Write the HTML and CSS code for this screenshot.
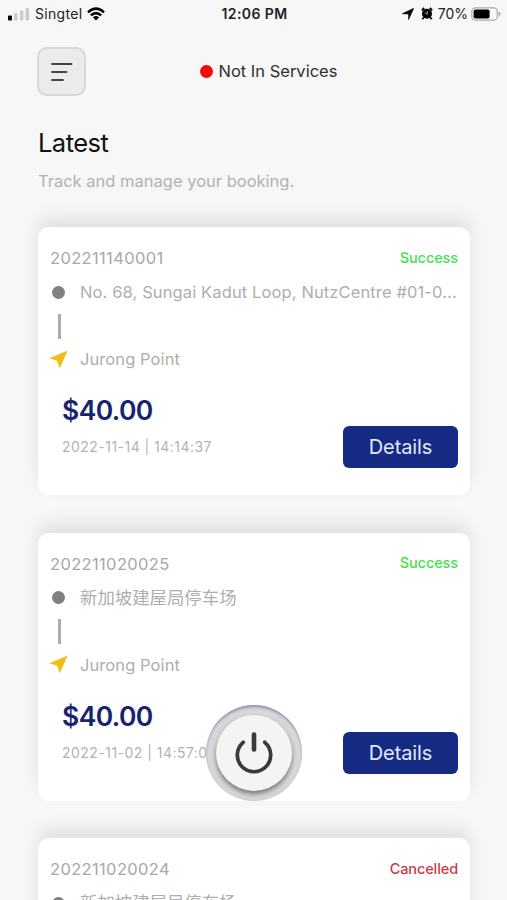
FILE: index.html
```html
<!DOCTYPE html>
<html lang="en">
<head>
<meta charset="utf-8">
<title>Bookings</title>
<link rel="stylesheet" href="styles.css">
</head>
<body>
<div class="screen">
  <div class="status-bar">
    <div class="status-left">
      <svg class="signal" width="22" height="14" viewBox="0 0 22 14"><rect x="0" y="8.5" width="4" height="5" rx="1" fill="#000"/><rect x="6" y="6" width="3.6" height="7.5" rx="1" fill="#ccc"/><rect x="11.8" y="3.5" width="3.6" height="10" rx="1" fill="#ccc"/><rect x="17.4" y="1" width="3.8" height="12.5" rx="1" fill="#ccc"/></svg>
      <span class="carrier">Singtel</span>
      <svg class="wifi" width="18" height="14" viewBox="0 0 18 14" fill="none" stroke="#000" stroke-width="2.5"><path d="M1 5.3Q9-2 17 5.3"/><path d="M3.9 8.4Q9 3.8 14.1 8.4"/><path d="M9 13.6L5.9 10.3Q9 7.8 12.1 10.3Z" fill="#000" stroke="none"/></svg>
    </div>
    <span class="clock">12:06 PM</span>
    <div class="status-right">
      <svg width="12" height="12" viewBox="0 0 11 11"><path d="M10.8.2L6 10.7V5.5L.2 5.3Z" fill="#000" stroke="#000" stroke-width=".5"/></svg>
      <svg class="alarm" width="12" height="13" viewBox="0 0 12 13"><circle cx="6" cy="6.8" r="5" fill="#000"/><path d="M.8 3.3L3.2 1M8.8 1l2.4 2.3M2.6 10.6L1.4 12.3M9.4 10.6l1.2 1.7" stroke="#000" stroke-width="1.8"/><path d="M6.3 4v3.2L3.9 5.8" fill="none" stroke="#bbb" stroke-width=".8"/></svg>
      <span class="percent">70%</span>
      <svg class="battery" width="30" height="14" viewBox="0 0 30 14"><rect x=".8" y=".8" width="25.5" height="12.4" rx="3.8" fill="#fafafa" stroke="#aaa" stroke-width="1.2"/><rect x="2.6" y="2.5" width="16" height="9" rx="1.8" fill="#000"/><path d="M27.6 4.8Q29.6 5.4 29.6 7T27.6 9.2Z" fill="#aaa"/></svg>
    </div>
  </div>

  <header class="top">
    <button class="menu" aria-label="Menu"><svg width="22" height="20" viewBox="0 0 22 20" fill="none" stroke="#444" stroke-width="1.8" stroke-linecap="round"><path d="M1 2H20.500M1 10H15.500M1 18H12"/></svg></button>
    <div class="service"><i class="red-dot"></i><span>Not In Services</span></div>
  </header>

  <h1>Latest</h1>
  <p class="subtitle">Track and manage your booking.</p>

  <main class="cards">
    <article class="card">
      <div class="card-head"><span class="id">202211140001</span><span class="state ok">Success</span></div>
      <div class="stop"><i class="dot"></i><span class="address">No. 68, Sungai Kadut Loop, NutzCentre #01-0...</span></div>
      <div class="line"></div>
      <div class="stop goal"><svg class="arrow" width="19" height="19" viewBox="0 0 19 19"><path d="M18.700.5L10.800 18.300L8.200 10.700L.3 8.200Z" fill="#f4bd16"/></svg><span class="place">Jurong Point</span></div>
      <div class="card-foot"><div><div class="price">$40.00</div><div class="date">2022-11-14 | 14:14:37</div></div><button class="details">Details</button></div>
    </article>
    <article class="card">
      <div class="card-head"><span class="id">202211020025</span><span class="state ok">Success</span></div>
      <div class="stop"><i class="dot"></i><span class="cjk">新加坡建屋局停车场</span></div>
      <div class="line"></div>
      <div class="stop goal"><svg class="arrow" width="19" height="19" viewBox="0 0 19 19"><path d="M18.700.5L10.800 18.300L8.200 10.700L.3 8.200Z" fill="#f4bd16"/></svg><span class="place">Jurong Point</span></div>
      <div class="card-foot"><div><div class="price">$40.00</div><div class="date">2022-11-02 | 14:57:0</div></div><button class="details">Details</button></div>
    </article>
    <article class="card">
      <div class="card-head"><span class="id">202211020024</span><span class="state bad">Cancelled</span></div>
      <div class="stop"><i class="dot"></i><span class="cjk">新加坡建屋局停车场</span></div>
    </article>
  </main>

  <button class="power" aria-label="Power"><span class="power-face"><svg width="40" height="44" viewBox="0 0 40 44" fill="none" stroke="#3a3a3a" stroke-width="3.700" stroke-linecap="round"><path d="M9.200 11.300A16.700 16.700 0 1 0 30.800 11.300"/><path d="M20 3.500V18.500" stroke-width="4.600"/></svg></span></button>
</div>
</body>
</html>
```
FILE: styles.css
```css
* { box-sizing: border-box; }
body { margin: 0; background: #f7f7f7; font-family: Inter, "Noto Sans CJK SC", sans-serif; }
button { font: inherit; border: 0; padding: 0; }
.screen { position: relative; width: 507px; height: 900px; overflow: hidden; white-space: nowrap; }
.status-bar { height: 27px; display: grid; grid-template-columns: 1fr auto 1fr; align-items: center; padding: 0 6px 0 8px; color: #222; font-size: 14px; line-height: 20px; }
.status-left, .status-right { display: flex; align-items: center; }
.status-right { justify-content: flex-end; }
.carrier { margin-left: 5px; letter-spacing: .3px; }
.wifi { margin-left: 5px; }
.clock { font-weight: 600; letter-spacing: .4px; }
.alarm { margin-left: 7px; }
.percent { margin: 0 3px 0 5px; }
.top { height: 48px; margin: 20px 38px 0 37px; display: grid; grid-template-columns: 162.500px 1fr; align-items: center; }
.menu { width: 49px; height: 49px; border: 2px solid #d8d8d8; border-radius: 10px; background: #ebebeb; display: grid; place-items: center; }
.service { display: flex; align-items: center; gap: 6px; margin-top: -1px; font-size: 16.500px; line-height: 22px; color: #303030; }
.red-dot { width: 13px; height: 13px; border-radius: 50%; background: #f40808; }
h1 { margin: 31px 0 0 38px; font-size: 25.500px; line-height: 34px; font-weight: 400; letter-spacing: -.55px; color: #111; }
.subtitle { margin: 10px 0 0 38px; font-size: 16.500px; line-height: 22px; color: #b2b2b2; }
.cards { margin: 35px 37px 0 38px; display: flex; flex-direction: column; gap: 37.500px; }
.card { height: 268px; flex: none; border-radius: 11px; background: #fff; padding: 20px 12px 0; box-shadow: 0 -10px 18px rgba(0, 0, 0, .09); }
.card-head { display: flex; justify-content: space-between; align-items: center; height: 22px; }
.id { font-size: 16.500px; line-height: 22px; letter-spacing: .35px; color: #a8a8a8; }
.state { font-size: 14.500px; font-weight: 500; line-height: 20px; margin-top: -.5px; letter-spacing: -.1px; }
.ok { color: #48df50; }
.bad { color: #c83b45; }
.stop { height: 22px; margin-top: 12px; display: flex; align-items: center; color: #aeaeae; font-size: 16.500px; line-height: 22px; }
.dot { width: 13px; height: 13px; margin: 0 15px 0 2px; border-radius: 50%; background: #808080; }
.address { letter-spacing: .12px; }
.place { letter-spacing: .08px; }
.cjk { font-size: 17.400px; }
.line { width: 3px; height: 25px; margin: 10.500px 0 0 7.500px; background: #acacac; }
.goal { margin-top: 9.500px; }
.arrow { margin: 0 12px 0 -1px; }
.card-foot { display: flex; justify-content: space-between; align-items: flex-end; margin: 23px 0 0 12px; }
.price { font-size: 26.500px; line-height: 34px; font-weight: 600; letter-spacing: -.6px; color: #17246f; }
.date { margin: 10px 0 11px; font-size: 14px; line-height: 20px; letter-spacing: .47px; color: #b3b3b3; }
.details { width: 115px; height: 42px; border-radius: 6px; background: #142a83; color: #e3e9fc; font-size: 20px; letter-spacing: -.1px; }
.power { position: absolute; left: 206px; top: 705px; width: 96px; height: 96px; border-radius: 50%; background: #d8d8da; box-shadow: inset 0 3px 3px -1px #8792b0, inset 0 0 3px #c2c2c4; display: grid; place-items: center; }
.power-face { width: 76px; height: 76px; border-radius: 50%; background: #f4f4f4; box-shadow: 0 3px 5px #777; display: grid; place-items: center; }
```
